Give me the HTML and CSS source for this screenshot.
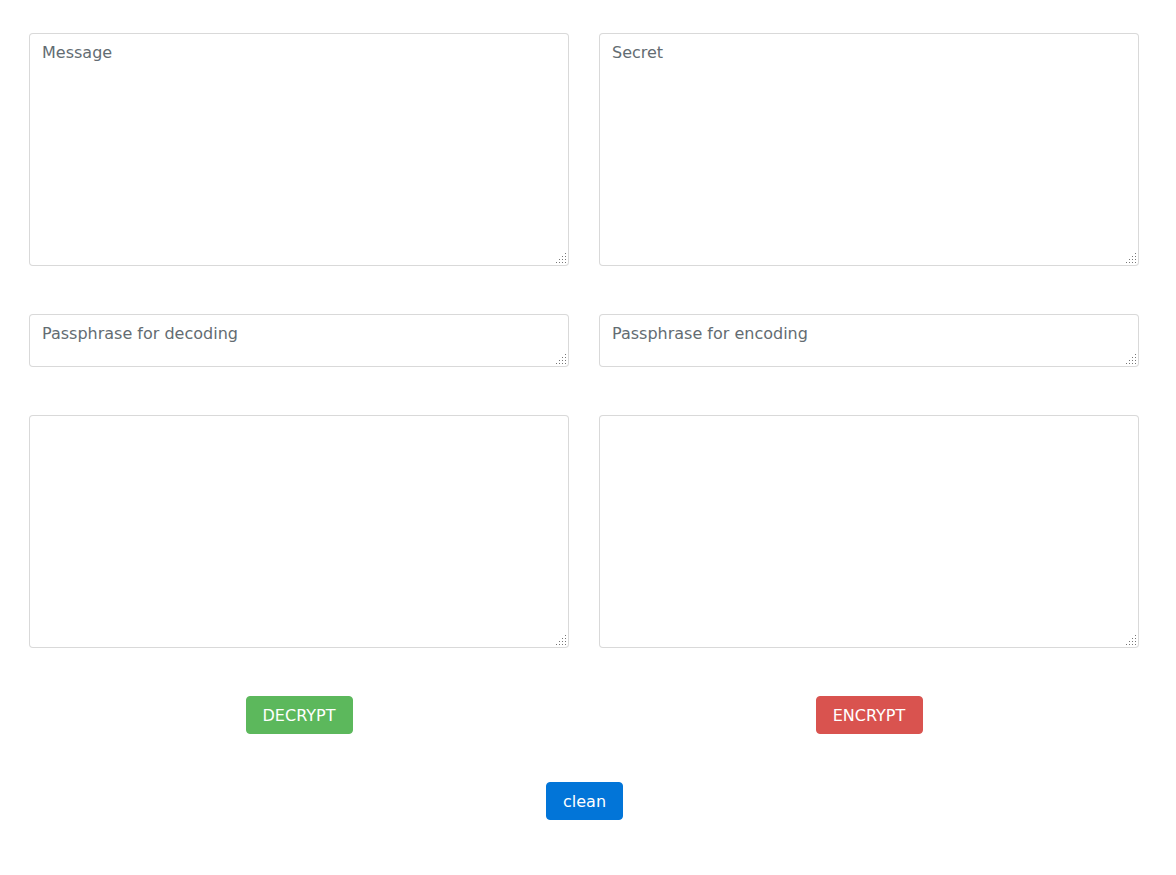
FILE: index.html
```html
<!DOCTYPE html>
<html>
<head>
<meta charset="utf-8">
<link rel="stylesheet" href="styles.css">
</head>
<body>
<main class="page">
  <div class="row">
    <textarea class="field tall" placeholder="Message"></textarea>
    <textarea class="field tall" placeholder="Secret"></textarea>
  </div>
  <div class="row">
    <textarea class="field short" placeholder="Passphrase for decoding"></textarea>
    <textarea class="field short" placeholder="Passphrase for encoding"></textarea>
  </div>
  <div class="row">
    <textarea class="field tall"></textarea>
    <textarea class="field tall"></textarea>
  </div>
  <div class="row">
    <div class="cell"><button class="btn btn-green btn-wide">DECRYPT</button></div>
    <div class="cell"><button class="btn btn-red btn-wide">ENCRYPT</button></div>
  </div>
  <div class="center">
    <button class="btn btn-blue btn-small">clean</button>
  </div>
</main>
</body>
</html>
```

FILE: styles.css
```css
html, body {
  margin: 0;
  padding: 0;
  background: #fff;
}
body {
  font-family: "DejaVu Sans", sans-serif;
  font-size: 16px;
  line-height: 1.5;
  color: #464a4c;
}
.page {
  width: 1110px;
  margin-left: 29px;
  padding-top: 33px;
  display: flex;
  flex-direction: column;
  gap: 48px;
}
.row {
  display: grid;
  grid-template-columns: 540px 540px;
  column-gap: 30px;
}
.field {
  box-sizing: border-box;
  display: block;
  width: 540px;
  margin: 0;
  padding: 7px 12px 5px;
  font-family: "DejaVu Sans", sans-serif;
  font-size: 16px;
  line-height: 1.5;
  color: #464a4c;
  border: 1px solid rgba(0, 0, 0, 0.15);
  border-radius: 4px;
  outline: none;
  resize: none;
  background-color: #fff;
  background-image: url("data:image/svg+xml;utf8,<svg xmlns='http://www.w3.org/2000/svg' width='10' height='10' fill='%23777'><rect x='9' y='0' width='1' height='1'/><rect x='6' y='3' width='1' height='1'/><rect x='9' y='3' width='1' height='1'/><rect x='3' y='6' width='1' height='1'/><rect x='6' y='6' width='1' height='1'/><rect x='9' y='6' width='1' height='1'/><rect x='0' y='9' width='1' height='1'/><rect x='3' y='9' width='1' height='1'/><rect x='6' y='9' width='1' height='1'/><rect x='9' y='9' width='1' height='1'/></svg>");
  background-repeat: no-repeat;
  background-position: right 2px bottom 2px;
}
.field::placeholder {
  color: #636c72;
  opacity: 1;
}
.tall { height: 233px; }
.short { height: 53px; }
.cell {
  display: flex;
  justify-content: center;
}
.center {
  display: flex;
  justify-content: center;
  padding-left: 1px;
}
.btn {
  box-sizing: border-box;
  height: 38px;
  padding: 7px 0 5px;
  font-family: "DejaVu Sans", sans-serif;
  font-size: 16px;
  line-height: 24px;
  color: #fff;
  text-align: center;
  border: 1px solid transparent;
  border-radius: 4px;
  cursor: pointer;
}
.btn-wide { width: 107px; }
.btn-small { width: 77px; }
.btn-green { background: #5cb85c; border-color: #5cb85c; }
.btn-red { background: #d9534f; border-color: #d9534f; }
.btn-blue { background: #0275d8; border-color: #0275d8; }
```
